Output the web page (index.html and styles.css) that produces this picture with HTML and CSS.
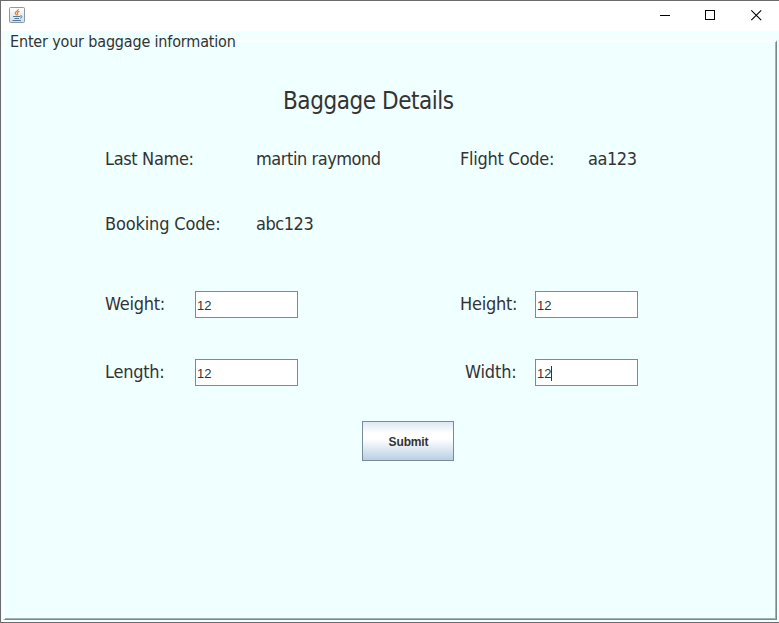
FILE: index.html
```html
<!DOCTYPE html>
<html lang="en">
<head>
<meta charset="utf-8">
<title>Baggage Details</title>
<link rel="stylesheet" href="styles.css">
</head>
<body>
<div class="window">
  <header class="titlebar">
    <svg class="app-icon" width="16" height="16" viewBox="0 0 16 16">
      <defs><linearGradient id="tile" x1="0" y1="0" x2="0" y2="1"><stop offset="0" stop-color="#fff"/><stop offset="1" stop-color="#d3dde6"/></linearGradient></defs>
      <rect x=".5" y=".5" width="15" height="15" rx="1" fill="url(#tile)" stroke="#8799aa"/>
      <path d="M9.300 2C9.800 4 5.800 4.500 6.300 6.300c.2.8 1 1.300 1.300 2M10.500 4.300C9 4.800 7.900 5.600 8.500 6.600c.4.7.3 1.200-.3 1.700" fill="none" stroke="#ee7d20" stroke-width="1.200"/>
      <path d="M4 9.500h7M5.500 11.500h4.500M3.500 13.500h8.500M11 9c2.800-.8 2.500 1.700.2 2.300" fill="none" stroke="#51799b" stroke-width="1"/>
    </svg>
    <div class="controls">
      <svg class="control" width="46" height="30" viewBox="0 0 46 30"><path d="M18 14.500h10" stroke="#000"/></svg>
      <svg class="control" width="46" height="30" viewBox="0 0 46 30"><rect x="17.500" y="9.500" width="9" height="9" fill="none" stroke="#000"/></svg>
      <svg class="control" width="46" height="30" viewBox="0 0 46 30"><path d="M17.300 9.300l9.900 9.900M27.200 9.300l-9.900 9.900" stroke="#000" stroke-width="1.100"/></svg>
    </div>
  </header>
  <main class="panel">
    <fieldset class="group">
      <legend class="legend">Enter your baggage information</legend>
      <h1 class="title">Baggage Details</h1>
      <div class="row names">
        <span class="tight">Last Name:</span><span class="tighter">martin raymond</span><span>Flight Code:</span><span class="tighter">aa123</span>
      </div>
      <div class="row names booking">
        <span class="loose">Booking Code:</span><span class="tighter">abc123</span>
      </div>
      <div class="row sizes weight">
        <span>Weight:</span><div class="field">12</div><span>Height:</span><div class="field">12</div>
      </div>
      <div class="row sizes length">
        <span>Length:</span><div class="field">12</div><span class="width-label loose">Width:</span><div class="field">12<i class="caret"></i></div>
      </div>
      <button class="submit">Submit</button>
    </fieldset>
  </main>
</div>
</body>
</html>
```
FILE: styles.css
```css
* { box-sizing: border-box; }
body { margin: 0; color: #333; font-family: "DejaVu Sans Condensed", "DejaVu Sans", sans-serif; font-stretch: condensed; }
.window { width: 779px; height: 623px; background: #fff; border: 1px solid #6b6b6b; border-right: 0; display: flex; flex-direction: column; overflow: hidden; }
.titlebar { height: 30px; display: flex; justify-content: space-between; padding-left: 8px; }
.app-icon { margin-top: 6px; }
.controls { display: flex; margin-right: -1px; }
.control { display: block; }
.panel { flex: 1; background: #f0ffff; padding: 0 2px 2px; }
.group { height: 100%; margin: 0; min-width: 0; padding: 0; border: solid; border-width: 2px 1px 1px 2px; border-color: #fff #7a8888 #7a8888 #fff; box-shadow: inset -1px -1px #a4b2b2; }
.legend { margin-left: 3px; padding: 1px 2px 0; height: 20px; line-height: 20px; font-size: 16px; letter-spacing: -.17px; white-space: nowrap; }
.title { margin: 34px 0 0 278px; font-size: 24px; line-height: 32px; font-weight: 400; letter-spacing: -.45px; white-space: nowrap; }
.row { display: grid; align-items: center; height: 27px; margin-left: 100px; font-size: 18px; line-height: 27px; letter-spacing: -.25px; white-space: nowrap; }
.tight { letter-spacing: -.35px; }
.tighter { letter-spacing: -.45px; }
.loose { letter-spacing: -.15px; }
.names { grid-template-columns: 151px 204px 128px 60px; margin-top: 28px; }
.booking { margin-top: 38px; }
.sizes { grid-template-columns: 90px 265px 75px 103px; }
.sizes > span { margin-top: -2px; }
.weight { margin-top: 54px; }
.length { margin-top: 41px; }
.width-label { padding-left: 5px; }
.field { display: flex; align-items: center; width: 103px; height: 27px; padding: 2px 0 0 1px; border: 1px solid #7a8a99; background: #fff; font: 13px "Liberation Sans", sans-serif; letter-spacing: 0; }
.caret { width: 1px; height: 15px; background: #333; }
.submit { display: block; width: 92px; height: 40px; margin: 35px 0 0 357px; padding: 1px 0 0 1px; border: 1px solid #7a8a99; border-radius: 0; background: linear-gradient(#dde8f3, #fff 30%, #fff 45%, #b8cfe5); color: #333; font: bold 12px "Liberation Sans", sans-serif; letter-spacing: -.15px; }
```
